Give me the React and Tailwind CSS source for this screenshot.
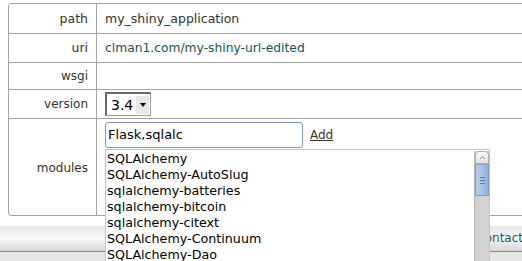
export default function App() {
  const items = [
    "SQLAlchemy",
    "SQLAlchemy-AutoSlug",
    "sqlalchemy-batteries",
    "sqlalchemy-bitcoin",
    "sqlalchemy-citext",
    "SQLAlchemy-Continuum",
    "SQLAlchemy-Dao",
    "SQLAlchemy-Defaults",
  ];
  const font = { fontFamily: '"DejaVu Sans", Verdana, sans-serif' };
  return (
    <div className="relative w-[522px] h-[261px] overflow-hidden bg-white text-[12px] text-[#333]" style={font}>
      <div className="pt-[3px] pl-[8px]">
        <div className="w-[540px] border border-[#a3a3a3] rounded-[3px]">
          <div className="grid grid-cols-[88px_1fr] h-[30px] border-b border-[#a3a3a3]">
            <div className="border-r border-[#a3a3a3] flex items-center justify-end pr-[8px] pt-[2px] text-[12.5px]">path</div>
            <div className="flex items-center pl-[8px] pt-[2px] text-[12.5px]">my_shiny_application</div>
          </div>
          <div className="grid grid-cols-[88px_1fr] h-[29px] border-b border-[#a3a3a3]">
            <div className="border-r border-[#a3a3a3] flex items-center justify-end pr-[8px] pt-[1px] text-[12.5px]">uri</div>
            <div className="flex items-center pl-[8px] pt-[1px] text-[12.3px] text-[#1d5260]">clman1.com/my-shiny-url-edited</div>
          </div>
          <div className="grid grid-cols-[88px_1fr] h-[27px] border-b border-[#a3a3a3]">
            <div className="border-r border-[#a3a3a3] flex items-center justify-end pr-[8px]">wsgi</div>
            <div></div>
          </div>
          <div className="grid grid-cols-[88px_1fr] h-[29px] border-b border-[#a3a3a3]">
            <div className="border-r border-[#a3a3a3] flex items-center justify-end pr-[8px]">version</div>
            <div className="flex items-start pl-[8px] pt-[2px]">
              <div className="w-[46px] h-[24px] border border-[#9a9a9a] border-t-2 border-l-2 border-t-[#6a6a6a] border-l-[#6a6a6a] flex items-center bg-white">
                <span className="pl-[4px] text-[14px] text-black leading-none">3.4</span>
                <div className="ml-auto mr-[1px] w-[13px] h-[18px] bg-[#e6e6e6] flex items-center justify-center">
                  <div className="w-0 h-0 border-l-[3px] border-r-[3px] border-t-[4px] border-l-transparent border-r-transparent border-t-black"></div>
                </div>
              </div>
            </div>
          </div>
          <div className="grid grid-cols-[88px_1fr] h-[96px]">
            <div className="border-r border-[#a3a3a3] flex items-center justify-end pr-[8px] pt-[2px]">modules</div>
            <div className="pl-[8px] pt-[3px] flex items-start gap-[7px]">
              <div className="w-[198px] h-[26px] border border-[#7d9ac0] rounded-[3px] flex items-center pl-[2px] text-[13px] text-black">
                Flask,sqlalc
              </div>
              <span className="underline text-[12px] text-[#333] mt-[4px]">Add</span>
            </div>
          </div>
        </div>
      </div>
      <div className="mt-[10px] h-[26px] bg-gradient-to-b from-[#e6e6e6] via-[#fafafa] to-[#d6d6d6] border-b border-b-[#8a8a8a] flex items-center justify-end text-[#1d5260]">
        <span className="mr-[-1px] mt-[-2px]">Contact</span>
      </div>
      <div className="h-[20px] bg-[#e6e6e6]"></div>

      <div className="absolute left-[105px] top-[149px] w-[385px] h-[130px] bg-white border border-[#c4c4c4] flex">
        <div className="flex-1 pl-[1px] pt-[1px] text-[12.7px] text-black">
          {items.map((t) => (
            <div key={t} className="h-[16px] leading-[16px] whitespace-nowrap">{t}</div>
          ))}
        </div>
        <div className="w-[15px] mt-[1px] flex flex-col bg-[#d2d2d2] border-l border-[#b8b8b8]">
          <div className="h-[13px] bg-gradient-to-b from-[#fafafa] to-[#e2e2e2] border border-[#b0b0b0] rounded-t-[4px] flex items-center justify-center">
            <svg width="7" height="5" viewBox="0 0 7 5"><path d="M1 4 L3.5 1.5 L6 4" fill="none" stroke="#888" strokeWidth="1" /></svg>
          </div>
          <div className="h-[32px] bg-gradient-to-r from-[#b7cdea] via-[#a9c3e6] to-[#8eaed8] border border-[#7f9cc6] flex flex-col items-center justify-center gap-[2px]">
            <div className="w-[5px] h-px bg-[#5d7ea8]"></div>
            <div className="w-[5px] h-px bg-[#5d7ea8]"></div>
            <div className="w-[5px] h-px bg-[#5d7ea8]"></div>
          </div>
        </div>
      </div>
    </div>
  );
}
